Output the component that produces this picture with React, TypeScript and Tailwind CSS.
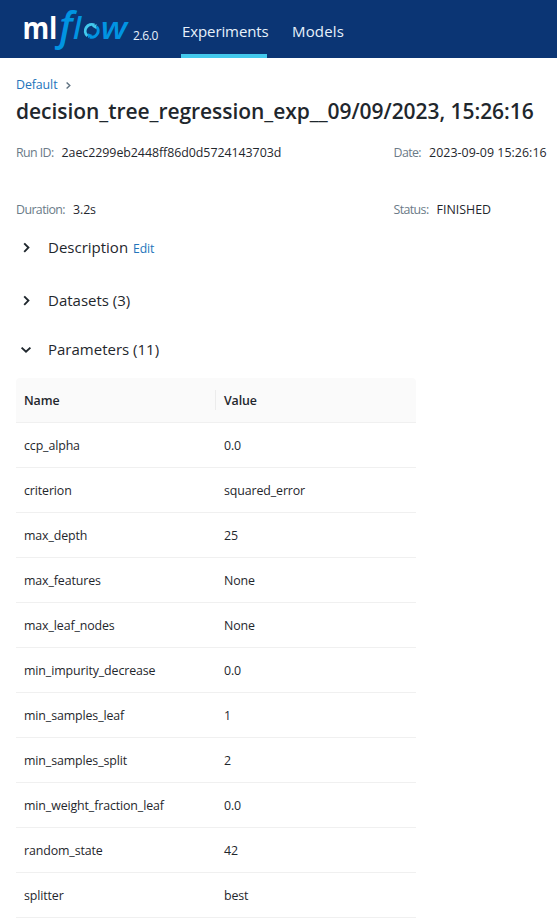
const params = [
  { name: "ccp_alpha", value: "0.0" },
  { name: "criterion", value: "squared_error" },
  { name: "max_depth", value: "25" },
  { name: "max_features", value: "None" },
  { name: "max_leaf_nodes", value: "None" },
  { name: "min_impurity_decrease", value: "0.0" },
  { name: "min_samples_leaf", value: "1" },
  { name: "min_samples_split", value: "2" },
  { name: "min_weight_fraction_leaf", value: "0.0" },
  { name: "random_state", value: "42" },
  { name: "splitter", value: "best" },
];

function Logo() {
  return (
    <svg width="106" height="46" viewBox="23 5 106 46" className="block shrink-0 overflow-visible" aria-label="mlflow">
      <g fontFamily="'Open Sans', sans-serif">
        <text x="22.4" y="39" fontSize="30" fontWeight="700" fill="#fff" textLength="35" lengthAdjust="spacingAndGlyphs">ml</text>
        <g fill="#0194e2" fontStyle="italic" fontWeight="600">
          <text x="59.3" y="39.5" fontSize="39">f</text>
          <text x="73" y="39" fontSize="30">l</text>
          <text x="100.8" y="39" fontSize="30" textLength="26.5" lengthAdjust="spacingAndGlyphs">w</text>
        </g>
      </g>
      <g fill="none" strokeWidth="2.9">
        <path d="M87.6 35.9 A6.5 6.5 0 0 1 94.5 25" stroke="#43c9ed" />
        <path d="M96.6 26.6 A6.5 6.5 0 0 1 89.8 37" stroke="#0194e2" />
      </g>
      <path d="M92 26.5 L96.6 24 L96.2 29 Z" fill="#43c9ed" />
      <path d="M92.5 35 L87.6 33.2 L88.2 38.2 Z" fill="#0194e2" />
    </svg>
  );
}

function Chevron({ open }: { open?: boolean }) {
  return (
    <svg width="12" height="12" viewBox="0 0 12 12" className="shrink-0" fill="none" stroke="#1f272d" strokeWidth="1.9">
      {open ? <path d="M1.6 3.6 L6 7.8 L10.4 3.6" /> : <path d="M4.2 1.4 L8.4 5.6 L4.2 9.8" />}
    </svg>
  );
}

function Section({ title, open, edit, className }: { title: string; open?: boolean; edit?: boolean; className: string }) {
  return (
    <div className={"flex h-6 items-center pl-1 " + className}>
      <Chevron open={open} />
      <span className="ml-4 pb-0.5 text-[15px] leading-[22px]">{title}</span>
      {edit && <a className="ml-[5px] pt-px text-[12.2px] leading-[23px] tracking-[-0.1px] text-[#2374bb]">Edit</a>}
    </div>
  );
}

function Meta({ label, value, valueClass = "" }: { label: string; value: string; valueClass?: string }) {
  return (
    <div className="flex gap-2 whitespace-nowrap leading-5">
      <span className="tracking-[-0.6px] text-[#6b7b88]">{label}</span>
      <span className={valueClass}>{value}</span>
    </div>
  );
}

export default function App() {
  return (
    <div className="h-[922px] w-[557px] overflow-hidden bg-white font-['Open_Sans',sans-serif] text-[12.4px] text-[#1f272d]">
      <header className="flex h-[58px] bg-[#0b3574] pl-[23px] text-[#e7f1fb]">
        <div className="pt-[5px]"><Logo /></div>
        <span className="ml-1 w-[48px] pt-[26px] text-[12px] leading-5 tracking-[-0.4px]">2.6.0</span>
        <nav className="flex gap-[25px] text-[15px] leading-6 tracking-[-0.1px]">
          <a className="h-[58px] w-[86px] border-b-4 border-[#43c9ed] pt-[19px] pl-px">Experiments</a>
          <a className="pt-[19px] tracking-[0.15px]">Models</a>
        </nav>
      </header>

      <main className="px-4">
        <div className="flex items-center gap-2 pt-[17px] leading-5">
          <a className="tracking-[-0.1px] text-[#2374bb]">Default</a>
          <svg width="6" height="8" viewBox="0 0 6 8" fill="none" stroke="#5f7281" strokeWidth="1.4"><path d="M1.6 1.4 L4.8 4.4 L1.6 7.4" /></svg>
        </div>
        <h1 className="mt-0.5 text-[21px] font-semibold leading-7 tracking-[-0.05px] whitespace-nowrap">decision_tree_regression_exp__09/09/2023, 15:26:16</h1>

        <div className="mt-[18px] grid grid-cols-[377.5px_1fr] gap-y-[37px]">
          <Meta label="Run ID:" value="2aec2299eb2448ff86d0d5724143703d" valueClass="tracking-[-0.05px]" />
          <Meta label="Date:" value="2023-09-09 15:26:16" valueClass="tracking-[0.04px]" />
          <Meta label="Duration:" value="3.2s" valueClass="tracking-[-0.1px]" />
          <Meta label="Status:" value="FINISHED" />
        </div>

        <Section title="Description" edit className="mt-4" />
        <Section title="Datasets (3)" className="mt-[29px]" />
        <Section title="Parameters (11)" open className="mt-[25px]" />

        <div className="mt-4 w-[400px]">
          <div className="flex h-[45px] items-center rounded-t border-b border-[#f0f0f0] bg-[#fafafa] font-semibold tracking-[-0.1px]">
            <div className="flex h-5 w-[200px] items-center border-r border-[#ececec] pt-0.5 pl-2">Name</div>
            <div className="pt-0.5 pl-2">Value</div>
          </div>
          {params.map((p) => (
            <div key={p.name} className="flex h-[45px] items-center border-b border-[#f0f0f0] pt-0.5 tracking-[-0.12px]">
              <div className="w-[200px] pl-2">{p.name}</div>
              <div className="pl-2">{p.value}</div>
            </div>
          ))}
        </div>
      </main>
    </div>
  );
}
